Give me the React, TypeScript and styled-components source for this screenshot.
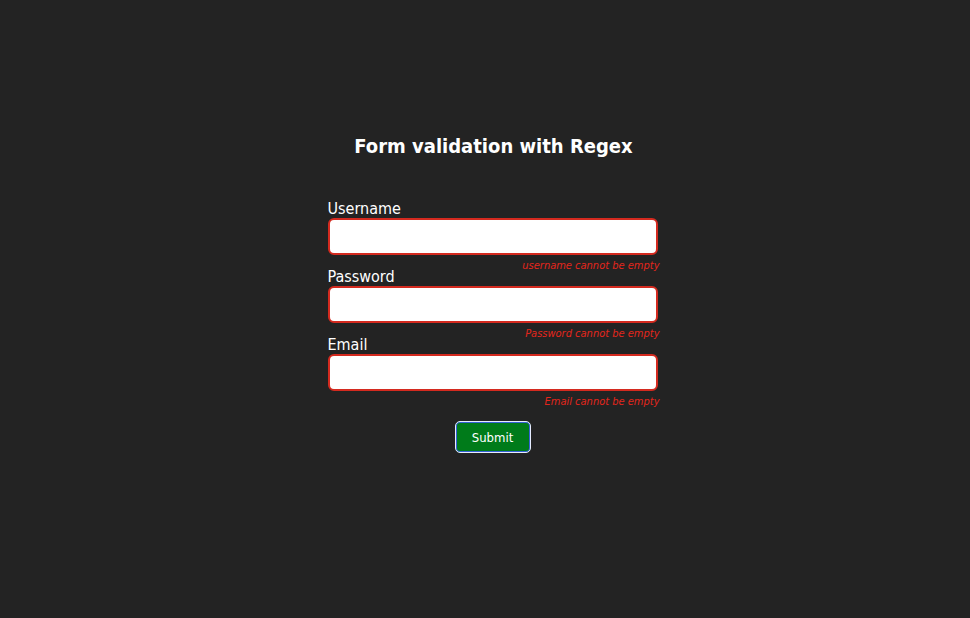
import React from 'react'
import styled, { createGlobalStyle } from 'styled-components'

const GlobalStyle = createGlobalStyle`
  html, body {
    margin: 0;
    padding: 0;
    background: #232323;
  }
  body {
    font-family: "DejaVu Sans Condensed", "DejaVu Sans", sans-serif;
    color: #ffffff;
  }
`

const Page = styled.div`
  display: flex;
  justify-content: center;
  width: 100%;
  height: 618px;
  padding-top: 133px;
  padding-left: 17px;
  box-sizing: border-box;
`

const Form = styled.form`
  display: flex;
  flex-direction: column;
  width: 332px;
`

const Title = styled.h1`
  margin: 0 0 41px 0;
  font-size: 20px;
  font-weight: bold;
  text-align: center;
  line-height: 26px;
`

const Field = styled.div`
  display: flex;
  flex-direction: column;
`

const Label = styled.label`
  font-size: 16px;
  line-height: 18px;
`

const Input = styled.input`
  box-sizing: border-box;
  width: 330px;
  height: 37px;
  border: 2px solid #d42a1f;
  border-radius: 6px;
  background: #ffffff;
  outline: none;
  padding: 0 8px;
`

const ErrorText = styled.span`
  font-size: 11px;
  font-style: italic;
  color: #e3261c;
  text-align: right;
  line-height: 13px;
  margin-top: 4px;
  margin-bottom: -4px;
`

const Actions = styled.div`
  display: flex;
  justify-content: center;
  margin-top: 17px;
  padding-right: 2px;
`

const Button = styled.button`
  width: 76px;
  height: 32px;
  background: #007b1a;
  color: #ffffff;
  font-family: inherit;
  font-size: 13px;
  border: 1px solid #e6ecff;
  box-shadow: inset 0 0 0 1px #3560d4;
  border-radius: 5px;
  cursor: pointer;
`

const fields = [
  { label: 'Username', type: 'text', error: 'username cannot be empty' },
  { label: 'Password', type: 'password', error: 'Password cannot be empty' },
  { label: 'Email', type: 'email', error: 'Email cannot be empty' },
]

export default function App() {
  return (
    <>
      <GlobalStyle />
      <Page>
        <Form onSubmit={e => e.preventDefault()}>
          <Title>Form validation with Regex</Title>
          {fields.map(f => (
            <Field key={f.label}>
              <Label>{f.label}</Label>
              <Input type={f.type} />
              <ErrorText>{f.error}</ErrorText>
            </Field>
          ))}
          <Actions>
            <Button type="submit">Submit</Button>
          </Actions>
        </Form>
      </Page>
    </>
  )
}
